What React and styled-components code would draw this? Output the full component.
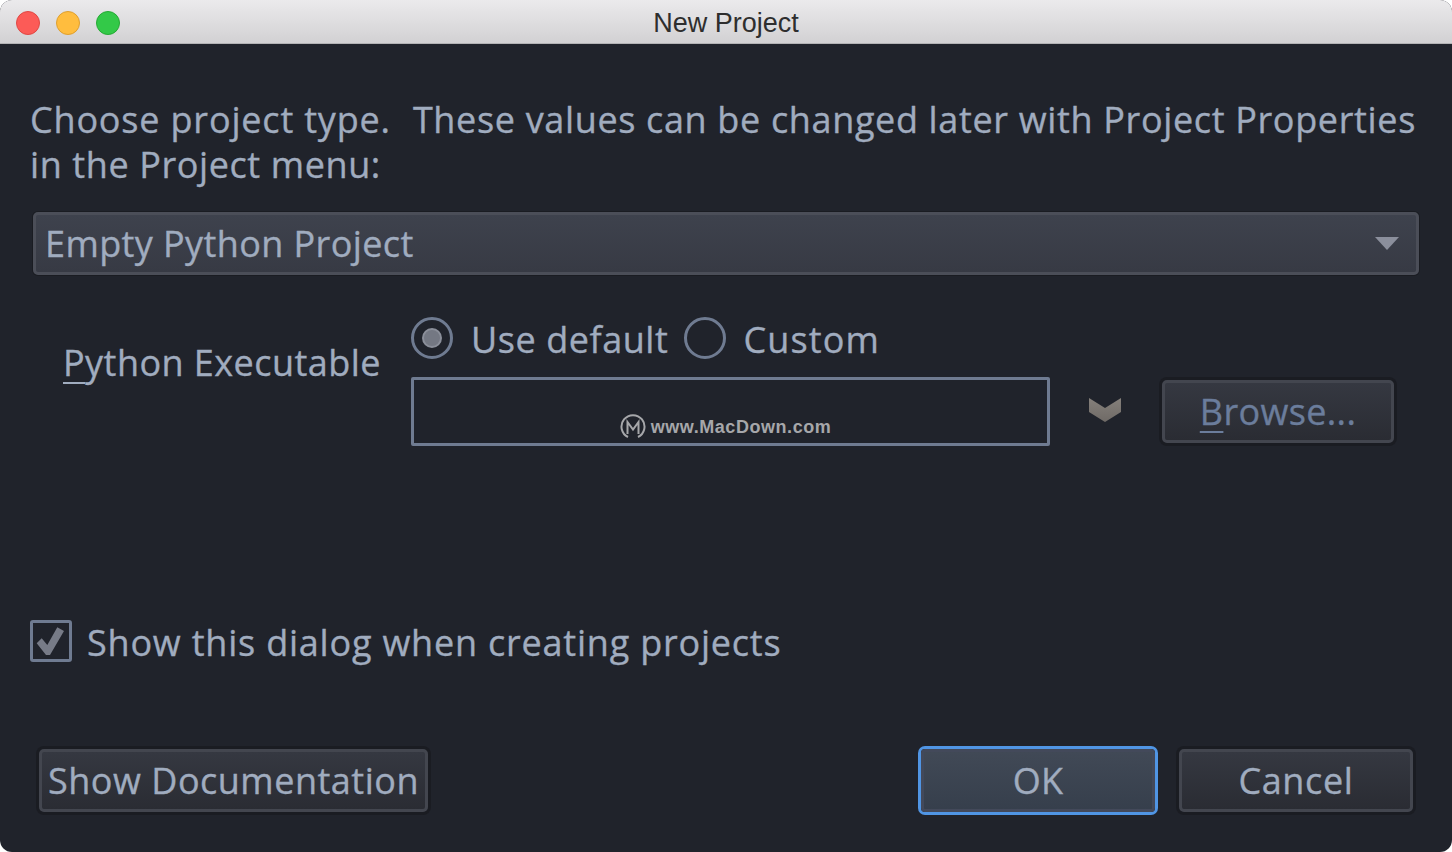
import React from "react";
import styled, { createGlobalStyle } from "styled-components";

const Global = createGlobalStyle`
  html, body { margin: 0; padding: 0; background: #ffffff; }
  body { width: 1452px; height: 852px; overflow: hidden; font-family: "Open Sans", "Noto Sans", sans-serif; }
`;

const Win = styled.div`
  width: 1452px; height: 852px; display: flex; flex-direction: column;
  background: #20232b; border-radius: 12px; overflow: hidden;
`;
const TitleBar = styled.div`
  height: 44px; flex: none; box-sizing: border-box; display: grid; grid-template-columns: 1fr auto 1fr; align-items: center;
  padding: 0 16px 0 16px;
  background: linear-gradient(#ebeaec, #d2d1d3);
  border-bottom: 1px solid #b3b3b5;
`;
const Lights = styled.div`display: flex; gap: 16px;`;
const Light = styled.span`
  width: 24px; height: 24px; border-radius: 50%; box-sizing: border-box;
  background: ${p => p.$c}; border: 1px solid ${p => p.$b};
`;
const Title = styled.div`
  font-family: "Liberation Sans", Arial, sans-serif; font-size: 27px; color: #2e2e2e; line-height: 46px;
`;
const Body = styled.div`
  flex: 1; display: flex; flex-direction: column; padding: 53px 37px 37px 30px; color: #a0acbf;
  font-size: 36px; letter-spacing: 0.35px; -webkit-text-stroke: 0.35px currentColor;
`;
const Intro = styled.div`line-height: 45px; width: 1400px; height: 90px; white-space: nowrap;`;
const IntroLine = styled.div`letter-spacing: ${p => p.$ls}px;`;
const IntroLead = styled.span`letter-spacing: 0.82px; margin-right: 2px;`;
const Select = styled.div`
  margin: 25px 0 0 3px; width: 1386px; height: 63px; box-sizing: border-box; flex: none;
  display: flex; align-items: center; justify-content: space-between; padding: 0 17px 0 9px;
  border: 3px solid #4b4e58; border-radius: 5px; box-shadow: 0 0 0 1px #1a1c22;
  background: linear-gradient(#3e424d, #373a44);
  letter-spacing: 0.4px;
`;
const Arrow = styled.span`
  width: 0; height: 0; border-left: 12px solid transparent; border-right: 12px solid transparent;
  border-top: 13px solid #8b8f9c;
`;
const ExecRow = styled.div`
  display: flex; margin: 42px 0 0 33px;
`;
const ExecLabel = styled.div`
  width: 348px; flex: none; padding-top: 23px; line-height: 45px; height: 45px; letter-spacing: 0.45px;
`;
const U = styled.span`
  text-decoration: underline; text-decoration-thickness: 2px; text-underline-offset: 6px;
`;
const ExecColumn = styled.div`display: flex; flex-direction: column;`;
const RadioRow = styled.div`display: flex; align-items: center; height: 45px;`;
const Radio = styled.span`
  width: 42px; height: 42px; border-radius: 50%; box-sizing: border-box; border: 3px solid #6f7b91; flex: none;
  align-self: flex-start;
  display: flex; align-items: center; justify-content: center; margin-right: ${p => p.$mr}px;
`;
const RadioDot = styled.span`
  width: 20px; height: 20px; border-radius: 50%; background: #747883; border: 2px solid #8b8f9a; box-sizing: border-box;
`;
const RadioText = styled.span`margin-right: ${p => p.$mr || 0}px; letter-spacing: ${p => p.$ls}px;`;
const PathRow = styled.div`display: flex; align-items: center; margin-top: 15px;`;
const PathField = styled.div`
  width: 639px; height: 69px; box-sizing: border-box; border: 3px solid #6f7b91; border-radius: 2px; flex: none;
  display: flex; align-items: flex-end; justify-content: center; padding: 0 10px 3px 0; gap: 5px;
  -webkit-text-stroke: 0;
`;
const Watermark = styled.span`
  font-family: "Liberation Sans", Arial, sans-serif; font-weight: 700; font-size: 18px; letter-spacing: 0.55px; color: #a6a7aa; line-height: 26px;
`;
const Chevron = styled.svg`margin: -4px 0 0 38px; flex: none;`;
const Btn = styled.div`
  box-sizing: border-box; height: 63px; width: ${p => p.$w}px; flex: none;
  display: flex; align-items: center; justify-content: center;
  border-radius: 5px; border: 3px solid #43464f;
  box-shadow: 0 0 0 3px #1a1c22;
  background: linear-gradient(#353841, #2a2c33);
  color: ${p => p.$color || "inherit"};
  letter-spacing: ${p => p.$ls ?? 0.35}px;
`;
const BrowseBtn = styled(Btn)`margin-left: 40px;`;
const OkBtn = styled(Btn)`
  border-color: #43495a; box-shadow: 0 0 0 3px #5095e4; border-radius: 4px;
  background: linear-gradient(#414956, #363f4c);
`;
const CheckRow = styled.div`display: flex; align-items: center; margin-top: 172px; height: 46px;`;
const CheckBox = styled.span`
  width: 42px; height: 42px; box-sizing: border-box; border: 3px solid #6f7b91; border-radius: 3px; flex: none;
  display: flex; align-items: center; justify-content: center; margin-right: 15px;
`;
const CheckText = styled.span`letter-spacing: 0.79px; padding-top: 2px;`;
const Footer = styled.div`
  display: flex; align-items: center; margin: 85px 0 0 9px; justify-content: space-between;
`;
const FooterRight = styled.div`display: flex; gap: 24px; margin-right: 2px;`;

const MLogo = () => (
  <svg width="26" height="26" viewBox="0 0 26 26" fill="none" stroke="#a6a7aa" strokeWidth="2">
    <path d="M8 23A11.5 11.5 0 1 1 18 23" />
    <path d="M7.5 20V8l5.5 7.5L18.500 8v12" />
  </svg>
);

export default function App() {
  return (
    <Win>
      <Global />
      <TitleBar>
        <Lights>
          <Light $c="#fc5b57" $b="#df4844" />
          <Light $c="#ffbd3e" $b="#de9f2f" />
          <Light $c="#33c948" $b="#26a934" />
        </Lights>
        <Title>New Project</Title>
        <span />
      </TitleBar>
      <Body>
        <Intro>
          <IntroLine $ls={0.65}><IntroLead>Choose project type.</IntroLead>&nbsp; These values can be changed later with Project Properties</IntroLine>
          <IntroLine $ls={0.6}>in the Project menu:</IntroLine>
        </Intro>
        <Select>
          <span>Empty Python Project</span>
          <Arrow />
        </Select>
        <ExecRow>
          <ExecLabel><U>P</U>ython Executable</ExecLabel>
          <ExecColumn>
            <RadioRow>
              <Radio $mr={18}><RadioDot /></Radio>
              <RadioText $mr={16} $ls={0.55}>Use default</RadioText>
              <Radio $mr={17} />
              <RadioText $ls={1.15}>Custom</RadioText>
            </RadioRow>
            <PathRow>
              <PathField>
                <MLogo />
                <Watermark>www.MacDown.com</Watermark>
              </PathField>
              <Chevron width="34" height="26" viewBox="0 0 34 26">
                <defs>
                  <linearGradient id="chev" x1="0" y1="0" x2="0" y2="1">
                    <stop offset="0" stopColor="#85807b" />
                    <stop offset="1" stopColor="#6f6a66" />
                  </linearGradient>
                </defs>
                <path d="M1 1 L17 11 L33 1 V15 L17 25 L1 15 Z" fill="url(#chev)" />
              </Chevron>
              <BrowseBtn $w={232} $color="#6b7d9c"><span><U>B</U>rowse...</span></BrowseBtn>
            </PathRow>
          </ExecColumn>
        </ExecRow>
        <CheckRow>
          <CheckBox>
            <svg width="30" height="30" viewBox="0 0 30 30">
              <path d="M0.700 17.300 L5.700 12.300 L11.300 19 L21.300 1.300 L28 5 L14 29 L10 29 Z" fill="#777b87" />
            </svg>
          </CheckBox>
          <CheckText>Show this dialog when creating projects</CheckText>
        </CheckRow>
        <Footer>
          <Btn $w={389} $ls={0.5}>Show Documentation</Btn>
          <FooterRight>
            <OkBtn $w={234}>OK</OkBtn>
            <Btn $w={234} $ls={0.65}>Cancel</Btn>
          </FooterRight>
        </Footer>
      </Body>
    </Win>
  );
}
